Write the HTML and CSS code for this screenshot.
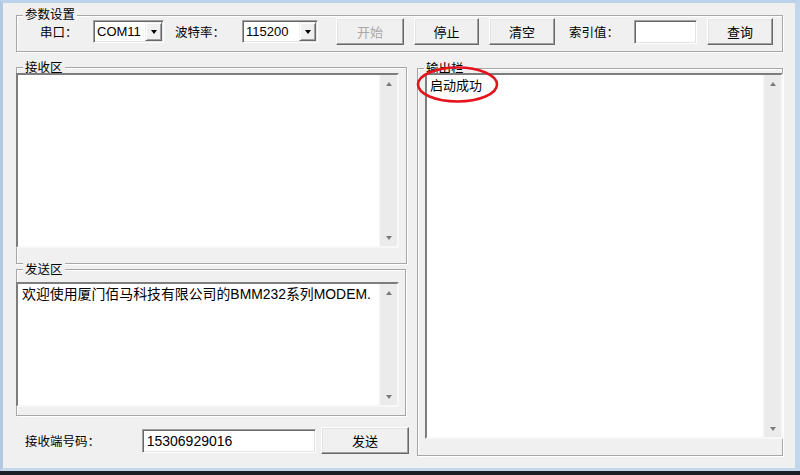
FILE: index.html
```html
<!DOCTYPE html>
<html lang="zh-CN">
<head>
<meta charset="utf-8">
<title>BMM232</title>
<link rel="stylesheet" href="styles.css">
</head>
<body>
<div class="screen">
  <div class="window">
    <div class="client">
      <div class="group params">
        <span class="group-title">参数设置</span>
        <div class="param-row">
          <span class="field-label lbl-port">串口：</span>
          <div class="combo combo-com">
            <span class="combo-value">COM11</span>
            <span class="combo-btn"><i class="tri-down"></i></span>
          </div>
          <span class="field-label lbl-baud">波特率：</span>
          <div class="combo combo-rate">
            <span class="combo-value">115200</span>
            <span class="combo-btn"><i class="tri-down"></i></span>
          </div>
          <div class="btn-group">
            <button class="btn btn-start" disabled>开始</button>
            <button class="btn btn-stop">停止</button>
            <button class="btn btn-clear">清空</button>
          </div>
          <span class="field-label lbl-index">索引值：</span>
          <div class="edit edit-index"></div>
          <button class="btn btn-query">查询</button>
        </div>
      </div>

      <div class="main">
        <div class="left-col">
          <div class="group recv">
            <span class="group-title">接收区</span>
            <div class="memo">
              <div class="memo-text"></div>
              <div class="vscroll">
                <span class="sb-arrow"><i class="sb-up"></i></span>
                <span class="sb-arrow"><i class="sb-down"></i></span>
              </div>
            </div>
          </div>
          <div class="group send">
            <span class="group-title">发送区</span>
            <div class="memo">
              <div class="memo-text send-text">欢迎使用厦门佰马科技有限公司的BMM232系列MODEM.</div>
              <div class="vscroll">
                <span class="sb-arrow"><i class="sb-up"></i></span>
                <span class="sb-arrow"><i class="sb-down"></i></span>
              </div>
            </div>
          </div>
          <div class="send-row">
            <span class="field-label lbl-phone">接收端号码：</span>
            <div class="edit edit-phone">15306929016</div>
            <button class="btn btn-send">发送</button>
          </div>
        </div>

        <div class="group output">
          <span class="group-title">输出栏</span>
          <div class="memo">
            <div class="memo-text out-text">启动成功</div>
            <div class="vscroll">
              <span class="sb-arrow"><i class="sb-up"></i></span>
              <span class="sb-arrow"><i class="sb-down"></i></span>
            </div>
          </div>
          <svg class="mark" width="84" height="40" viewBox="0 0 84 40">
            <ellipse cx="41.5" cy="19.5" rx="39.5" ry="17" fill="none" stroke="#e3141b" stroke-width="2.6"/>
          </svg>
        </div>
      </div>
    </div>
  </div>
  <div class="taskbar"></div>
</div>
</body>
</html>
```

FILE: styles.css
```css
body {
  margin: 0;
  background: #000;
  font-family: "Liberation Sans", "Noto Sans CJK SC", sans-serif;
  color: #000;
}

.screen {
  width: 800px;
  height: 475px;
  overflow: hidden;
}

.window {
  box-sizing: border-box;
  width: 800px;
  height: 471px;
  border-style: solid;
  border-width: 3px 5px 3px 3px;
  border-color: #bcd2ea #c2d6ec #c4d8ed #b3c9e1;
  background: #f0f0f0;
}

.client {
  box-sizing: border-box;
  height: 100%;
  padding: 12px 12px 0 13px;
}

.taskbar {
  height: 4px;
  background: #1b1f25;
}

/* group boxes */
.group {
  position: relative;
  box-sizing: border-box;
  border: 1px solid #a6a6a6;
  box-shadow: inset 1px 1px #fff, 1px 1px #fff;
}

.group-title {
  position: absolute;
  top: -7px;
  left: 6px;
  padding: 0 2px;
  background: #f0f0f0;
  font-size: 12.5px;
  line-height: 15px;
}

.params .group-title {
  top: -8px;
}

/* parameter bar */
.params {
  height: 37px;
}

.param-row {
  display: flex;
  align-items: center;
  height: 27px;
  margin-top: 2px;
}

.field-label {
  box-sizing: border-box;
  font-size: 12.5px;
  white-space: nowrap;
}

.lbl-port { width: 76px; padding-left: 23px; }
.lbl-baud { width: 78px; padding-left: 11px; }
.lbl-index { width: 79px; padding-left: 14px; }
.lbl-phone { width: 126px; padding-left: 9px; }

.combo {
  box-sizing: border-box;
  display: flex;
  height: 23px;
  background: #fff;
  border: 1px solid;
  border-color: #a0a0a0 #fff #fff #a0a0a0;
  box-shadow: inset 1px 1px #696969, inset -1px -1px #e3e3e3;
}

.combo-com { width: 71px; }
.combo-rate { width: 76px; }

.combo-value {
  flex: 1;
  padding-left: 3px;
  font-size: 13px;
  line-height: 21px;
}

.combo-btn {
  box-sizing: border-box;
  width: 17px;
  margin: 1px 1px 1px 0;
  display: flex;
  align-items: center;
  justify-content: center;
  background: #f0f0f0;
  border: 1px solid;
  border-color: #f0f0f0 #696969 #696969 #f0f0f0;
  box-shadow: inset 1px 1px #fff, inset -1px -1px #a0a0a0;
}

.tri-down {
  width: 0;
  height: 0;
  border-left: 3.5px solid transparent;
  border-right: 3.5px solid transparent;
  border-top: 4px solid #000;
}

.btn-group {
  display: flex;
  gap: 10px;
  margin-left: 18px;
}

.btn {
  box-sizing: border-box;
  height: 27px;
  padding: 0;
  background: #f0f0f0;
  border: 1px solid;
  border-color: #fff #696969 #696969 #fff;
  box-shadow: inset -1px -1px #a0a0a0, inset 1px 1px #e3e3e3;
  font-family: "Liberation Sans", "Noto Sans CJK SC", sans-serif;
  font-size: 13px;
  color: #000;
}

.btn:disabled {
  color: #a8a8a8;
}

.btn-start { width: 68px; }
.btn-stop { width: 65px; }
.btn-clear { width: 66px; }
.btn-query { width: 66px; margin-left: 10px; }
.btn-send { width: 88px; margin-left: 5px; }

.edit {
  box-sizing: border-box;
  height: 24px;
  background: #fff;
  border: 1px solid;
  border-color: #a0a0a0 #fff #fff #a0a0a0;
  box-shadow: inset 1px 1px #696969, inset -1px -1px #e3e3e3;
}

.edit-index { width: 63px; }

.edit-phone {
  width: 175px;
  padding-left: 4px;
  font-size: 14px;
  line-height: 22px;
}

/* main area */
.main {
  display: flex;
  align-items: flex-start;
  gap: 8px;
  margin-top: 15px;
}

.left-col {
  width: 393px;
  display: flex;
  flex-direction: column;
}

.recv {
  width: 391px;
  height: 197px;
}

.send {
  width: 390px;
  height: 147px;
  margin-top: 5px;
}

.send-row {
  display: flex;
  align-items: center;
  height: 27px;
  margin-top: 11px;
}

.output {
  width: 366px;
  height: 388px;
  margin-top: 1px;
}

/* multi-line text boxes */
.memo {
  position: relative;
  z-index: 1;
  box-sizing: border-box;
  display: flex;
  background: #fff;
  border: 2px solid;
  border-color: #7d7d7d #f7f7f7 #f7f7f7 #7d7d7d;
}

.recv .memo {
  width: 383px;
  height: 175px;
  margin: 5px 0 0 -1px;
}

.send .memo {
  width: 383px;
  height: 125px;
  margin: 12px 0 0 -1px;
}

.output .memo {
  width: 358px;
  height: 366px;
  margin: 4px 0 0 7px;
}

.memo-text {
  flex: 1;
  padding: 2px 3px;
  line-height: 18px;
  white-space: nowrap;
}

.send-text {
  padding: 1px 4px 0;
  font-size: 13.9px;
}

.out-text {
  padding: 2px 3px;
  font-size: 13px;
}

.vscroll {
  width: 17px;
  display: flex;
  flex-direction: column;
  justify-content: space-between;
  background: #ebebeb;
  border-left: 1px solid #f6f6f6;
}

.sb-arrow {
  height: 17px;
  display: flex;
  align-items: center;
  justify-content: center;
}

.sb-up,
.sb-down {
  width: 0;
  height: 0;
  border-left: 3.5px solid transparent;
  border-right: 3.5px solid transparent;
}

.sb-up { border-bottom: 4px solid #7a7a7a; }
.sb-down { border-top: 4px solid #7a7a7a; }

.mark {
  position: absolute;
  left: -2px;
  top: -4px;
  z-index: 2;
}
```
